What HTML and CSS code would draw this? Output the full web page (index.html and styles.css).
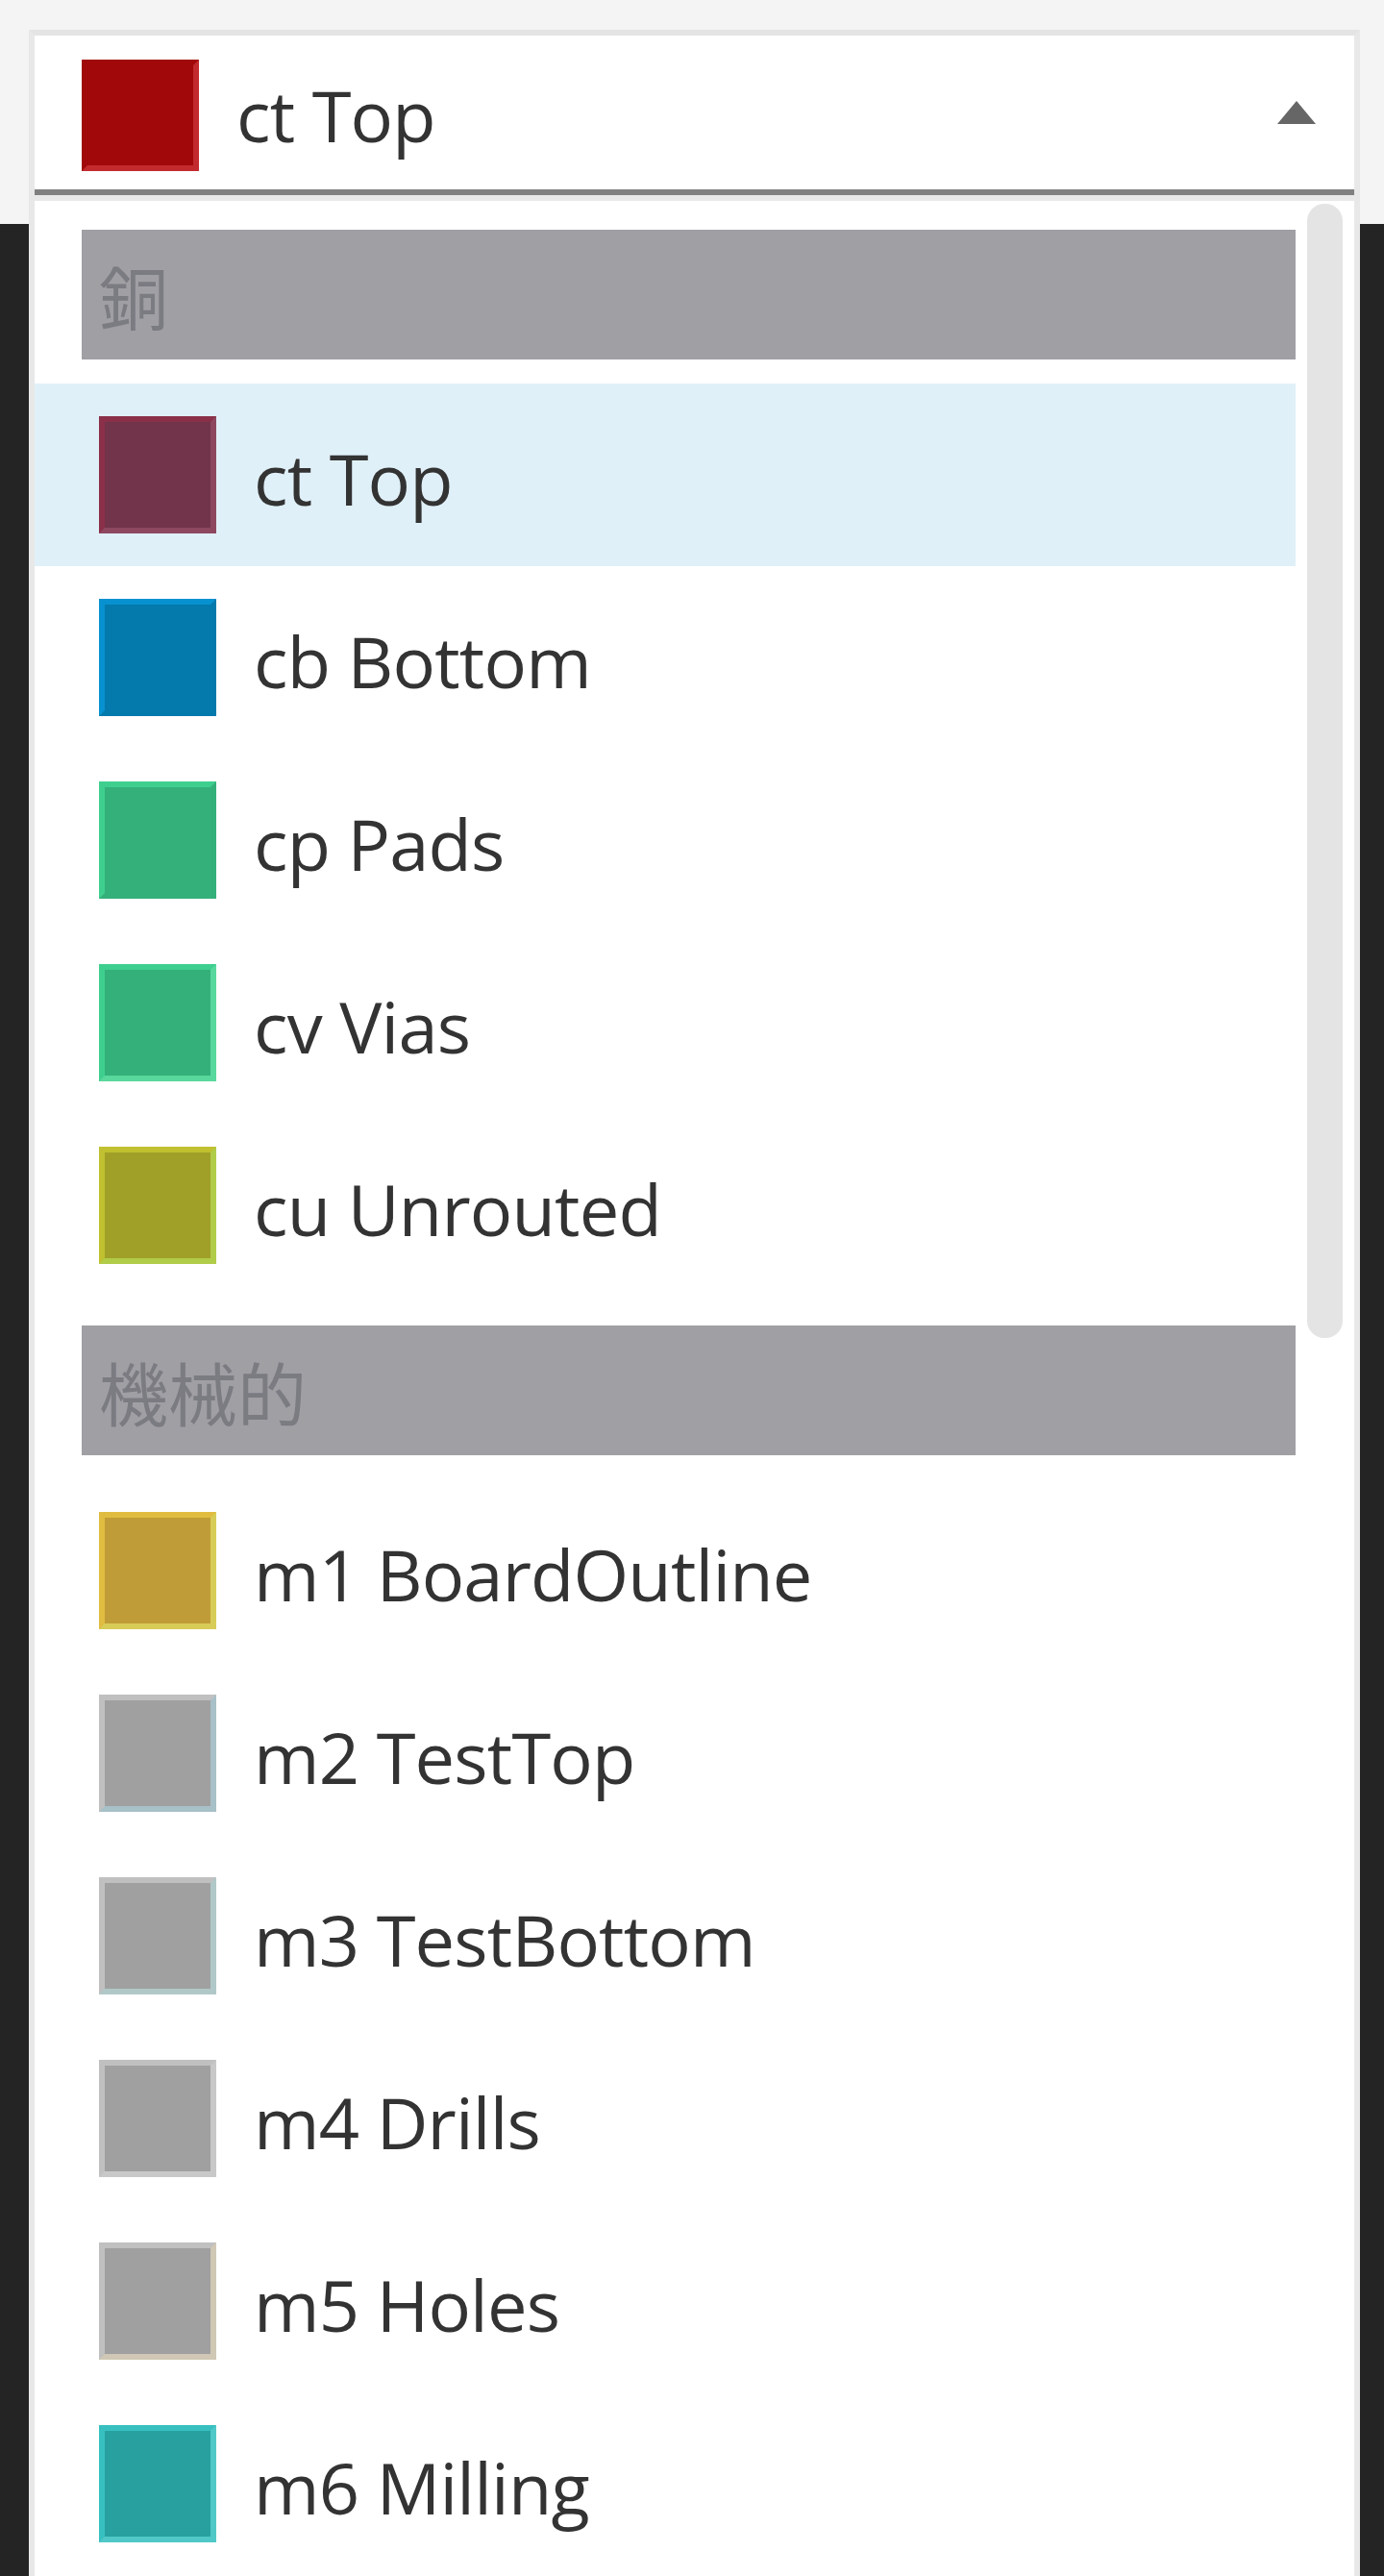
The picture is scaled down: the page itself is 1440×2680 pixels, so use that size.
FILE: index.html
```html
<!DOCTYPE html>
<html lang="ja">
<head>
<meta charset="utf-8">
<title>Layer select</title>
<link rel="stylesheet" href="styles.css">
</head>
<body>
<div class="dropdown">
  <div class="select">
    <span class="swatch swatch-select"></span>
    <span class="select-label">ct Top</span>
    <span class="caret"></span>
  </div>
  <div class="list">
    <div class="scrollbar"></div>
    <div class="group-header">銅</div>
    <div class="row row-active"><span class="swatch sw-ct"></span><span class="label">ct Top</span></div>
    <div class="row"><span class="swatch sw-cb"></span><span class="label">cb Bottom</span></div>
    <div class="row"><span class="swatch sw-cp"></span><span class="label">cp Pads</span></div>
    <div class="row"><span class="swatch sw-cv"></span><span class="label">cv Vias</span></div>
    <div class="row"><span class="swatch sw-cu"></span><span class="label">cu Unrouted</span></div>
    <div class="group-header">機械的</div>
    <div class="row"><span class="swatch sw-m1"></span><span class="label">m1 BoardOutline</span></div>
    <div class="row"><span class="swatch sw-m2"></span><span class="label">m2 TestTop</span></div>
    <div class="row"><span class="swatch sw-m3"></span><span class="label">m3 TestBottom</span></div>
    <div class="row"><span class="swatch sw-m4"></span><span class="label">m4 Drills</span></div>
    <div class="row"><span class="swatch sw-m5"></span><span class="label">m5 Holes</span></div>
    <div class="row"><span class="swatch sw-m6"></span><span class="label">m6 Milling</span></div>
  </div>
</div>
</body>
</html>
```

FILE: styles.css
```css
html, body {
  margin: 0;
  padding: 0;
  overflow: hidden;
}

body {
  height: 2680px;
  box-sizing: border-box;
  padding: 31px 25px 0 30px;
  background: linear-gradient(to bottom, #f4f4f4 0, #f4f4f4 233px, #242424 233px, #242424 100%);
  font-family: "Open Sans", "Noto Sans", "Noto Sans CJK JP", sans-serif;
  color: #333333;
}

.dropdown {
  width: 1385px;
  box-sizing: border-box;
  border-top: 6px solid #e4e4e4;
  border-left: 6px solid #e8e8e8;
  border-right: 6px solid #e8e8e8;
  background: #ffffff;
  display: flex;
  flex-direction: column;
  height: 2649px;
}

.select {
  height: 166px;
  box-sizing: border-box;
  display: flex;
  align-items: center;
  padding: 6px 40px 0 49px;
  border-bottom: 6px solid #808080;
  background: #ffffff;
}

.swatch {
  flex: none;
  width: 122px;
  height: 122px;
  box-sizing: border-box;
  border: 6px solid;
}

.swatch-select {
  height: 116px;
  background: #a0080a;
  border-color: #a0080a #c22a2e #c22a2e #a0080a;
}

.select-label {
  flex: 1;
  margin-left: 39px;
  font-size: 74px;
  letter-spacing: -0.8px;
  line-height: 1;
  padding-top: 0;
  color: #333333;
}

.caret {
  flex: none;
  width: 0;
  height: 0;
  border-left: 20px solid transparent;
  border-right: 20px solid transparent;
  border-bottom: 24px solid #666666;
  margin-bottom: 6px;
}

.list {
  position: relative;
  flex: 1;
  border-top: 6px solid #e8e8e8;
  padding: 30px 61px 0 0;
  background: #ffffff;
}

.scrollbar {
  position: absolute;
  top: 3px;
  right: 12px;
  width: 37px;
  height: 1180px;
  border-radius: 18px;
  background: #e4e4e4;
}

.group-header {
  height: 135px;
  margin: 0 0 25px 49px;
  padding-left: 18px;
  display: flex;
  align-items: center;
  background: #a09fa4;
  color: #7b7b82;
  font-family: "Noto Sans CJK JP", "Noto Sans CJK SC", sans-serif;
  font-size: 72px;
  line-height: 1;
}

.row + .group-header {
  margin-top: 30px;
}

.row {
  height: 190px;
  display: flex;
  align-items: center;
  padding-left: 67px;
}

.row-active {
  background: #e0f0f8;
}

.label {
  margin-left: 39px;
  font-size: 74px;
  letter-spacing: -0.8px;
  line-height: 1;
  padding-top: 8px;
  color: #333333;
}

.sw-ct { background: #72344a; border-color: #8a3048 #8d4860 #8d4860 #8a3048; }
.sw-cb { background: #0479ac; border-color: #0891d0 #0479ac #0479ac #0891d0; }
.sw-cp { background: #34b07a; border-color: #3ecf8e #34b07a #34b07a #3ecf8e; }
.sw-cv { background: #34b07a; border-color: #3ecf8e #58d89c #58d89c #3ecf8e; }
.sw-cu { background: #a0a028; border-color: #c0c030 #b0cc48 #b0cc48 #c0c030; }
.sw-m1 { background: #c09c38; border-color: #e0bc40 #d8cc58 #d8cc58 #e0bc40; }
.sw-m2 { background: #a0a0a0; border-color: #c0c0c0 #a8c0c8 #a8c0c8 #c0c0c0; }
.sw-m3 { background: #a0a0a0; border-color: #c0c0c0 #b0c8c8 #b0c8c8 #c0c0c0; }
.sw-m4 { background: #a0a0a0; border-color: #c0c0c0 #c8c8c8 #c8c8c8 #c0c0c0; }
.sw-m5 { background: #a0a0a0; border-color: #c0c0c0 #d0c8b4 #d0c8b4 #c0c0c0; }
.sw-m6 { background: #28a0a0; border-color: #38c0c0 #50c8c8 #50c8c8 #38c0c0; }
```
